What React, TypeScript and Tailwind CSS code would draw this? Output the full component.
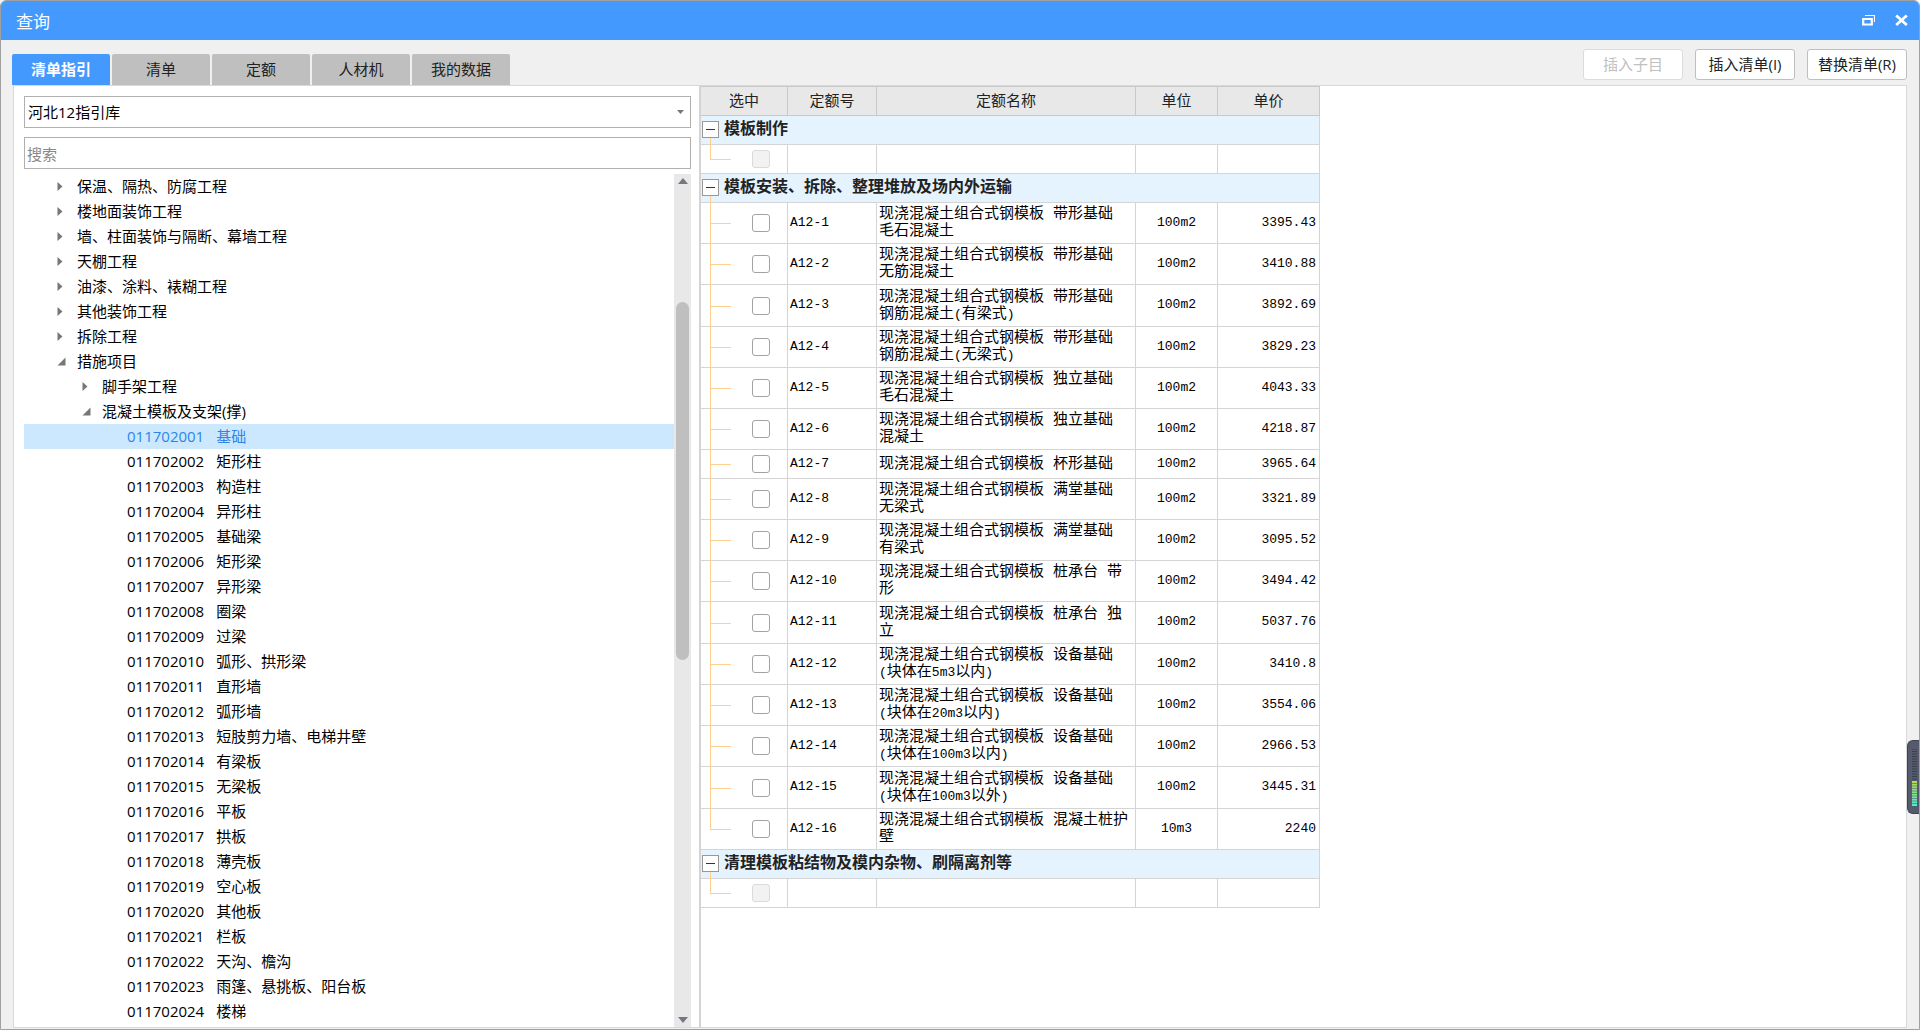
import { useState } from "react";

interface TreeNode {
  label: string;
  code?: string;
  level: 0 | 1 | 2;
  open?: boolean;
}

interface QuotaItem {
  code: string;
  name: string;
  unit: string;
  price: string;
}

interface QuotaGroup {
  title: string;
  items: QuotaItem[];
}

const TABS = ["清单指引", "清单", "定额", "人材机", "我的数据"];

const COMPONENTS = [
  "基础",
  "矩形柱",
  "构造柱",
  "异形柱",
  "基础梁",
  "矩形梁",
  "异形梁",
  "圈梁",
  "过梁",
  "弧形、拱形梁",
  "直形墙",
  "弧形墙",
  "短肢剪力墙、电梯井壁",
  "有梁板",
  "无梁板",
  "平板",
  "拱板",
  "薄壳板",
  "空心板",
  "其他板",
  "栏板",
  "天沟、檐沟",
  "雨篷、悬挑板、阳台板",
  "楼梯",
];

const TREE: TreeNode[] = [
  { label: "保温、隔热、防腐工程", level: 0 },
  { label: "楼地面装饰工程", level: 0 },
  { label: "墙、柱面装饰与隔断、幕墙工程", level: 0 },
  { label: "天棚工程", level: 0 },
  { label: "油漆、涂料、裱糊工程", level: 0 },
  { label: "其他装饰工程", level: 0 },
  { label: "拆除工程", level: 0 },
  { label: "措施项目", level: 0, open: true },
  { label: "脚手架工程", level: 1 },
  { label: "混凝土模板及支架(撑)", level: 1, open: true },
  ...COMPONENTS.map(
    (label, i): TreeNode => ({ label, level: 2, code: String(11702001 + i).padStart(9, "0") }),
  ),
];

const PREFIX = "现浇混凝土组合式钢模板 ";

const INSTALL_ROWS: [string, string, string][] = [
  ["带形基础 毛石混凝土", "100m2", "3395.43"],
  ["带形基础 无筋混凝土", "100m2", "3410.88"],
  ["带形基础 钢筋混凝土(有梁式)", "100m2", "3892.69"],
  ["带形基础 钢筋混凝土(无梁式)", "100m2", "3829.23"],
  ["独立基础 毛石混凝土", "100m2", "4043.33"],
  ["独立基础 混凝土", "100m2", "4218.87"],
  ["杯形基础", "100m2", "3965.64"],
  ["满堂基础 无梁式", "100m2", "3321.89"],
  ["满堂基础 有梁式", "100m2", "3095.52"],
  ["桩承台 带形", "100m2", "3494.42"],
  ["桩承台 独立", "100m2", "5037.76"],
  ["设备基础 (块体在5m3以内)", "100m2", "3410.8"],
  ["设备基础 (块体在20m3以内)", "100m2", "3554.06"],
  ["设备基础 (块体在100m3以内)", "100m2", "2966.53"],
  ["设备基础 (块体在100m3以外)", "100m2", "3445.31"],
  ["混凝土桩护壁", "10m3", "2240"],
];

const GROUPS: QuotaGroup[] = [
  { title: "模板制作", items: [] },
  {
    title: "模板安装、拆除、整理堆放及场内外运输",
    items: INSTALL_ROWS.map(([name, unit, price], i) => ({
      code: `A12-${i + 1}`,
      name: PREFIX + name,
      unit,
      price,
    })),
  },
  { title: "清理模板粘结物及模内杂物、刷隔离剂等", items: [] },
];

/* ── Title bar ──────────────────────────────────────────── */

function TitleBar() {
  return (
    <header className="flex h-[39px] shrink-0 items-center rounded-t-[5px] bg-[#4499ff] pr-[11px] pl-[15px] text-white">
      <h1 className="pt-[3px] text-[17px] leading-6">查询</h1>
      <div className="ml-auto flex items-center gap-5">
        <button type="button" aria-label="还原" className="h-[13px] w-[13px]">
          <svg viewBox="0 0 13 13" className="h-[13px] w-[13px]" fill="none" stroke="currentColor">
            <path d="M3 1.5h9.5v6.5" strokeWidth="1.2" />
            <path d="M1.2 5h8.6v5.5H1.2z" strokeWidth="2.2" />
          </svg>
        </button>
        <button type="button" aria-label="关闭" className="h-[13px] w-[13px]">
          <svg viewBox="0 0 13 13" className="h-[13px] w-[13px]" fill="none" stroke="currentColor">
            <path d="M1.2 1.5l10.6 9.5M11.8 1.5L1.2 11" strokeWidth="2.8" />
          </svg>
        </button>
      </div>
    </header>
  );
}

/* ── Left side: guide tree ──────────────────────────────── */

const INDENT = {
  0: "pl-[33px]",
  1: "pl-[58px]",
  2: "pl-[103px]",
};

function TreeArrow({ open }: { open?: boolean }) {
  return (
    <svg viewBox="0 0 9 9" className="h-[9px] w-[9px] shrink-0 fill-[#777]">
      {open ? <path d="M8.5 0.5V8.5H0.5z" /> : <path d="M0.5 0L5.5 4.5L0.5 9z" />}
    </svg>
  );
}

function ScrollBar() {
  return (
    <div className="flex w-[17px] shrink-0 flex-col items-center bg-[#e8e8e8]">
      <svg viewBox="0 0 10 6" className="my-[4px] h-[6px] w-[10px] fill-[#757880]">
        <path d="M0 6L5 0L10 6z" />
      </svg>
      <div className="grow-[114]" />
      <div className="w-[13px] grow-[357] rounded-full bg-[#bfbfbf]" />
      <div className="grow-[353]" />
      <svg viewBox="0 0 10 6" className="my-[4px] h-[6px] w-[10px] fill-[#757880]">
        <path d="M0 0L5 6L10 0z" />
      </svg>
    </div>
  );
}

function GuidePanel() {
  const [selected, setSelected] = useState("011702001");

  return (
    <section className="flex w-[685px] max-w-1/2 shrink-0 flex-col pt-[10px] pr-[8px] pl-[10px]">
      <div className="relative">
        <select
          aria-label="指引库"
          className="block h-8 w-full appearance-none border border-[#b0b0b0] bg-white pl-[3px] leading-6"
        >
          <option>河北12指引库</option>
        </select>
        <svg
          viewBox="0 0 7 4"
          className="pointer-events-none absolute top-[14px] right-[7px] h-[4px] w-[7px] fill-[#777]"
        >
          <path d="M0 0h7L3.5 4z" />
        </svg>
      </div>
      <input
        type="text"
        aria-label="搜索"
        placeholder="搜索"
        className="mt-[9px] block h-8 w-full border border-[#b0b0b0] bg-white px-[2px] pt-[2px] placeholder:text-[#888]"
      />
      <div className="mt-[5px] flex flex-1">
        <ul className="min-w-0 flex-1 leading-[25px]">
          {TREE.map((node) => {
            const active = node.code === selected;
            return (
              <li
                key={node.label}
                onClick={() => node.code && setSelected(node.code)}
                className={`flex h-[25px] items-center whitespace-nowrap ${INDENT[node.level]} ${
                  active ? "bg-[#cce8ff] text-[#2b86e8]" : ""
                }`}
              >
                {node.code ? (
                  <span className="mr-3">{node.code}</span>
                ) : (
                  <button type="button" aria-label="展开" className="mr-[11px] flex w-[9px]">
                    <TreeArrow open={node.open} />
                  </button>
                )}
                <span>{node.label}</span>
              </li>
            );
          })}
        </ul>
        <ScrollBar />
      </div>
    </section>
  );
}

/* ── Right side: quota table ────────────────────────────── */

// Half-width characters are set smaller than the Chinese ones beside them.
function MixedText({ text }: { text: string }) {
  return text.split(/([\x21-\x7e]+)/).map((part, i) =>
    i % 2 ? (
      <span key={i} className="text-[13px]">
        {part}
      </span>
    ) : (
      part
    ),
  );
}

function SelectCell({ label, last, disabled }: { label: string; last: boolean; disabled?: boolean }) {
  return (
    <td className="h-[inherit] border-r border-b border-[#d4d4d4] p-0">
      <div className="flex h-full">
        <div className="-mb-px ml-[9px] flex w-[21px] flex-col">
          <div className="flex-1 border-b border-l border-[#ffcf90]" />
          <div className={`flex-1 ${last ? "" : "border-l border-[#ffcf90]"}`} />
        </div>
        <input
          type="checkbox"
          aria-label={label}
          disabled={disabled}
          className="my-auto ml-[21px] h-[18px] w-[18px] appearance-none rounded-[3px] border border-[#a3a3a3] bg-white checked:bg-[#4499ff] disabled:border-[#dadada] disabled:bg-[#f2f2f2]"
        />
      </div>
    </td>
  );
}

function GroupRows({ group }: { group: QuotaGroup }) {
  const [open, setOpen] = useState(true);
  const cell = "border-r border-b border-[#d4d4d4]";

  return (
    <tbody>
      <tr className="h-[29px] bg-[#e5f3ff]">
        <th colSpan={5} className={`h-[29px] p-0 text-left ${cell}`}>
          <div className="flex h-full">
            <div className="-mb-px ml-px flex w-[17px] flex-col items-center">
              <button
                type="button"
                aria-label={group.title}
                aria-expanded={open}
                onClick={() => setOpen(!open)}
                className="mt-[5px] flex h-[17px] w-[17px] items-center justify-center border border-[#999] bg-white"
              >
                <span className="h-px w-[9px] bg-[#333]" />
              </button>
              <div className="w-px flex-1 bg-[#ffcf90]" />
            </div>
            <span className="ml-[5px] text-base leading-[28px] font-bold text-[#222]">{group.title}</span>
          </div>
        </th>
      </tr>
      {open && group.items.length === 0 && (
        <tr className="h-[29px]">
          <SelectCell label={group.title} last disabled />
          <td className={cell} />
          <td className={cell} />
          <td className={cell} />
          <td className={cell} />
        </tr>
      )}
      {open &&
        group.items.map((item, i) => (
          <tr
            key={item.code}
            className={item.name.length > 17 || item.name.includes("桩") ? "h-[41px] nth-[4n]:h-[42px]" : "h-[29px]"}
          >
            <SelectCell label={item.code} last={i === group.items.length - 1} />
            <td className={`pb-[2px] pl-[2px] text-[13px] ${cell}`}>{item.code}</td>
            <td className={`py-0 pr-[2px] pl-[2px] leading-[17px] ${cell}`}>
              <MixedText text={item.name} />
            </td>
            <td className={`pb-[2px] text-center text-[13px] ${cell}`}>{item.unit}</td>
            <td className={`pr-[3px] pb-[2px] text-right text-[13px] ${cell}`}>{item.price}</td>
          </tr>
        ))}
    </tbody>
  );
}

function QuotaTable() {
  return (
    <table className="w-[619px] table-fixed border-separate border-spacing-0 font-['Liberation_Mono','Noto_Sans_CJK_SC',monospace] leading-[17px]">
      <colgroup>
        <col className="w-[87px]" />
        <col className="w-[89px]" />
        <col className="w-[259px]" />
        <col className="w-[82px]" />
        <col className="w-[102px]" />
      </colgroup>
      <thead>
        <tr className="h-[30px] bg-[#e8e8e8] text-[#222]">
          {["选中", "定额号", "定额名称", "单位", "单价"].map((title) => (
            <th key={title} className="border-t border-r border-b border-[#c8c8c8] pt-[3px] font-normal">
              {title}
            </th>
          ))}
        </tr>
      </thead>
      {GROUPS.map((group) => (
        <GroupRows key={group.title} group={group} />
      ))}
    </table>
  );
}

/* ── Floating load meter on the window edge ─────────────── */

function LoadMeter() {
  return (
    <div className="absolute top-[739px] right-0 h-[74px] w-[12px] rounded-l-[6px] border border-r-0 border-[#3f4454] bg-[#555b6c]">
      <svg viewBox="0 0 11 72" className="h-[72px] w-[11px]">
        <defs>
          <linearGradient id="meter" x1="0" y1="0" x2="0" y2="1">
            <stop offset="0" stopColor="#b5d850" />
            <stop offset="1" stopColor="#4feccf" />
          </linearGradient>
          <pattern id="slots" width="5" height="5" patternUnits="userSpaceOnUse">
            <path d="M0 0h5v1H0zM0 2.5h5v1H0z" fill="#3a3f4c" />
          </pattern>
        </defs>
        <rect x="4" y="8" width="5" height="32" fill="url(#slots)" />
        <rect x="4" y="40" width="5" height="25" fill="url(#meter)" />
        <path
          d="M4 42.5h5M4 45h5M4 47.5h5M4 50h5M4 52.5h5M4 55h5M4 57.5h5M4 60h5M4 62.5h5"
          stroke="#555b6c"
          strokeWidth="0.6"
        />
      </svg>
    </div>
  );
}

/* ── Window ─────────────────────────────────────────────── */

export default function App() {
  const [tab, setTab] = useState(TABS[0]);
  const button =
    "h-[31px] w-[100px] rounded-[3px] border border-[#bfbfbf] bg-white text-[#222] disabled:border-[#dcdcdc] disabled:text-[#c0c0c0]";

  return (
    <div className="relative flex min-h-screen flex-col rounded-t-[6px] border border-[#a0a0a0] bg-[#f0f0f0] font-['Open_Sans','Noto_Sans_CJK_SC',sans-serif] text-[15px] text-black">
      <TitleBar />
      <div className="flex h-[45px] shrink-0 items-end pr-[12px] pl-[11px]">
        <nav role="tablist" className="flex gap-[2px]">
          {TABS.map((name) => (
            <button
              key={name}
              type="button"
              role="tab"
              aria-selected={tab === name}
              onClick={() => setTab(name)}
              className={`h-[31px] w-[98px] rounded-t-[2px] ${
                tab === name ? "bg-[#4499ff] font-bold text-white" : "bg-[#bfbfbf] text-[#222]"
              }`}
            >
              {name}
            </button>
          ))}
        </nav>
        <div className="mb-[5px] ml-auto flex gap-3">
          <button type="button" disabled className={button}>
            插入子目
          </button>
          <button type="button" className={button}>
            插入清单(I)
          </button>
          <button type="button" className={button}>
            替换清单(R)
          </button>
        </div>
      </div>
      <main className="mr-[12px] mb-px ml-[12px] flex flex-1 border border-[#d9d9d9] bg-white">
        <GuidePanel />
        <section className="min-w-0 flex-1 border-l-2 border-[#d4d4d4]">
          <QuotaTable />
        </section>
      </main>
      <LoadMeter />
    </div>
  );
}
